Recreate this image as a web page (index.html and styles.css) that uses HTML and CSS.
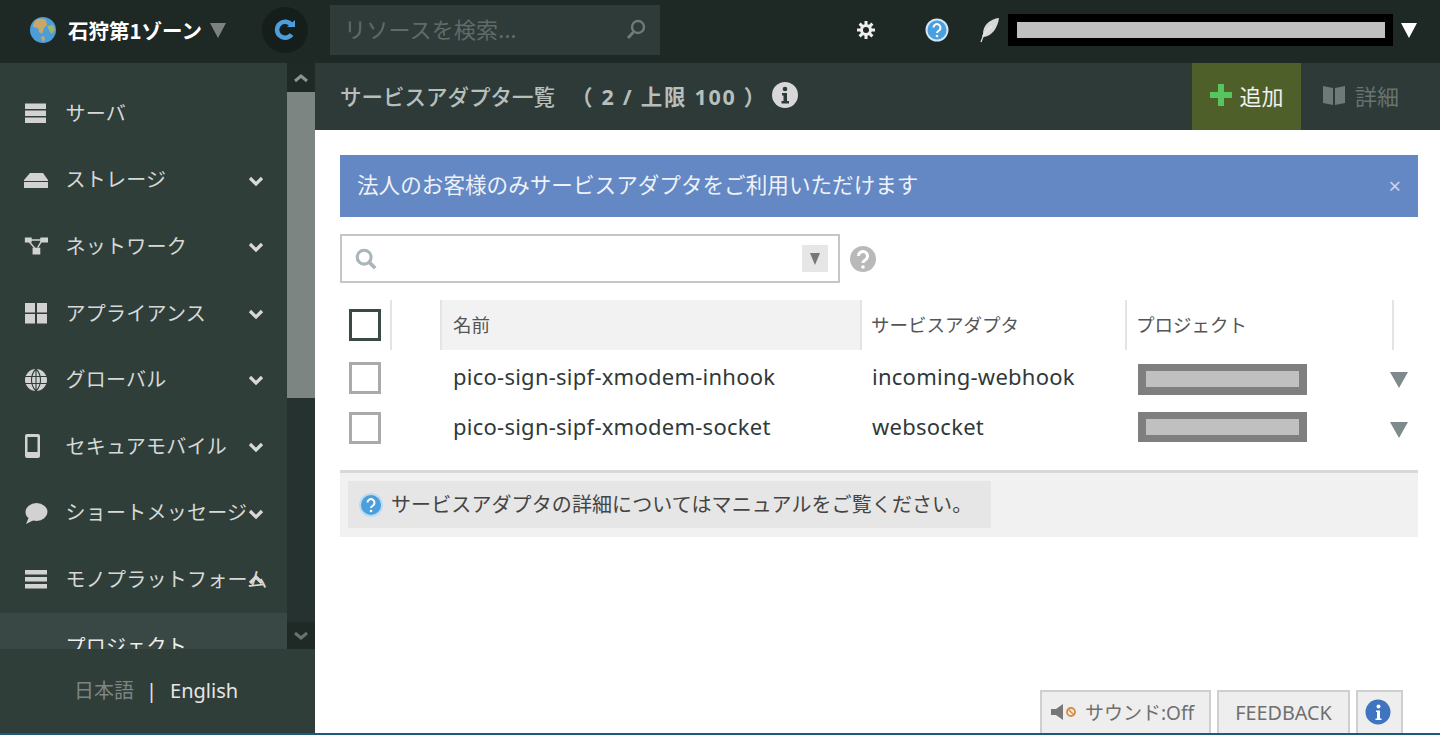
FILE: index.html
```html
<!DOCTYPE html>
<html lang="ja">
<head>
<meta charset="utf-8">
<title>サービスアダプタ一覧</title>
<link rel="stylesheet" href="styles.css">
</head>
<body>
<header class="topbar">
  <div class="zone">
    <svg class="globe" viewBox="0 0 26 26"><circle cx="13" cy="13" r="13" fill="#4d9ed8"/><path d="M6 3c3-2 8-2 10 0l1 5-3 3-2 6-3-2-1-4-5-1c0-3 1-5 3-7z" fill="#c8a86a"/><path d="M17 9l6-1 2 5-3 4-2-2z" fill="#9fb56d"/><path d="M11 20l3-1 1 4-2 2z" fill="#c8a86a"/></svg>
    <span class="zone-name">石狩第1ゾーン</span>
    <span class="tri tri-grey"></span>
  </div>
  <div class="refresh">
    <svg viewBox="0 0 24 24" width="24" height="24"><path d="M18.500 16.500a8 8 0 1 1 0-9.500" fill="none" stroke="#4a9fdc" stroke-width="4.500"/><path d="M14 9h8V2z" fill="#4a9fdc"/></svg>
  </div>
  <div class="top-search">
    <span class="top-search-text">リソースを検索...</span>
    <svg viewBox="0 0 24 24" width="24" height="24"><circle cx="14" cy="9" r="6" fill="none" stroke="#6f7b78" stroke-width="2.400"/><path d="M9.500 14L4 20" stroke="#6f7b78" stroke-width="3"/></svg>
  </div>
  <div class="top-right">
    <svg class="gear" viewBox="0 0 20 20" width="20" height="20"><circle cx="10" cy="10" r="4.500" fill="none" stroke="#eee" stroke-width="3"/><path d="M10 1v4M10 15v4M1 10h4M15 10h4M3.600 3.600l3 3M13.400 13.400l3 3M16.400 3.600l-3 3M6.600 13.400l-3 3" stroke="#eee" stroke-width="3"/></svg>
    <svg class="help" viewBox="0 0 24 24" width="24" height="24"><circle cx="12" cy="12" r="10.500" fill="#4a9fdc" stroke="#cfe6f6" stroke-width="2"/><path d="M8.500 9.500a3.500 3.500 0 1 1 5.500 3c-1.300.8-2 1.300-2 2.500" fill="none" stroke="#fff" stroke-width="2"/><circle cx="12" cy="18" r="1.300" fill="#fff"/></svg>
    <svg class="feather" viewBox="0 0 20 26" width="20" height="26"><path d="M19 1C10 2 3 8 3 17l-1 2 1 1C12 20 18 10 19 1z" fill="#d8d8d8"/><path d="M12 9C7 13 3 18 1 25" fill="none" stroke="#e8e8e8" stroke-width="1.200"/></svg>
    <div class="redact-user"><div class="redact-user-in"></div></div>
    <span class="tri tri-white"></span>
  </div>
</header>

<div class="layout">
  <aside class="side">
    <div class="nav-wrap">
      <nav class="nav">
        <div class="nav-item">
          <svg class="nav-icon" viewBox="0 0 24 24"><path d="M1 2.500h21v5.500H1zM1 9.500h21v5.500H1zM1 16.500h21v5.500H1z" fill="#d2d2d2"/></svg>
          <span class="nav-label">サーバ</span>
        </div>
        <div class="nav-item">
          <svg class="nav-icon" viewBox="0 0 24 24"><path d="M6 5h13l5 7v1H0v-1zM0 14h25v6H0z" fill="#d2d2d2"/></svg>
          <span class="nav-label">ストレージ</span>
          <svg class="chev" viewBox="0 0 16 12"><path d="M2 3l6 6 6-6" fill="none" stroke="#d8d8d8" stroke-width="3.200"/></svg>
        </div>
        <div class="nav-item">
          <svg class="nav-icon" viewBox="0 0 28 24"><path d="M1 2h8v6H1zM19 2h9v6h-9zM10 14h9v8h-9z" fill="#d2d2d2"/><path d="M8 5h12M6 7l7 8M20 7l-4 7" stroke="#d2d2d2" stroke-width="1.600"/></svg>
          <span class="nav-label">ネットワーク</span>
          <svg class="chev" viewBox="0 0 16 12"><path d="M2 3l6 6 6-6" fill="none" stroke="#d8d8d8" stroke-width="3.200"/></svg>
        </div>
        <div class="nav-item">
          <svg class="nav-icon" viewBox="0 0 24 24"><path d="M1 2h10v9.500H1zM13 2h10v9.500H13zM1 13h10v9.500H1zM13 13h10v9.500H13z" fill="#d2d2d2"/></svg>
          <span class="nav-label">アプライアンス</span>
          <svg class="chev" viewBox="0 0 16 12"><path d="M2 3l6 6 6-6" fill="none" stroke="#d8d8d8" stroke-width="3.200"/></svg>
        </div>
        <div class="nav-item">
          <svg class="nav-icon" viewBox="0 0 24 24"><circle cx="12" cy="12" r="11" fill="#d2d2d2"/><path d="M1 8.500h22M1 15.500h22M12 1v22M12 1c-6 6-6 16 0 22M12 1c6 6 6 16 0 22" fill="none" stroke="#303e3a" stroke-width="1.100"/></svg>
          <span class="nav-label">グローバル</span>
          <svg class="chev" viewBox="0 0 16 12"><path d="M2 3l6 6 6-6" fill="none" stroke="#d8d8d8" stroke-width="3.200"/></svg>
        </div>
        <div class="nav-item">
          <svg class="nav-icon" viewBox="0 0 24 24"><path d="M3 0h11a2 2 0 0 1 2 2v20a2 2 0 0 1-2 2H3a2 2 0 0 1-2-2V2a2 2 0 0 1 2-2zM3.500 3v15h10V3z" fill="#d2d2d2"/></svg>
          <span class="nav-label">セキュアモバイル</span>
          <svg class="chev" viewBox="0 0 16 12"><path d="M2 3l6 6 6-6" fill="none" stroke="#d8d8d8" stroke-width="3.200"/></svg>
        </div>
        <div class="nav-item">
          <svg class="nav-icon" viewBox="0 0 24 24"><ellipse cx="12.500" cy="11" rx="11" ry="9" fill="#d2d2d2"/><path d="M5 16l-3 7 8-4z" fill="#d2d2d2"/></svg>
          <span class="nav-label">ショートメッセージ</span>
          <svg class="chev" viewBox="0 0 16 12"><path d="M2 3l6 6 6-6" fill="none" stroke="#d8d8d8" stroke-width="3.200"/></svg>
        </div>
        <div class="nav-item">
          <svg class="nav-icon" viewBox="0 0 24 24"><path d="M1 3h22v4.500H1zM1 10h22v4.500H1zM1 17h22v4.500H1z" fill="#d2d2d2"/></svg>
          <span class="nav-label">モノプラットフォーム</span>
          <svg class="chev" viewBox="0 0 16 12"><path d="M2 9l6-6 6 6" fill="none" stroke="#d8d8d8" stroke-width="3.200"/></svg>
        </div>
        <div class="nav-item nav-sel">
          <span class="nav-icon-space"></span>
          <span class="nav-label">プロジェクト</span>
        </div>
      </nav>
      <div class="scrollbar">
        <div class="sb-btn sb-up"><svg viewBox="0 0 16 10" width="16" height="10"><path d="M2 8l6-5 6 5" fill="none" stroke="#8c9491" stroke-width="3"/></svg></div>
        <div class="sb-thumb"></div>
        <div class="sb-track"></div>
        <div class="sb-btn sb-down"><svg viewBox="0 0 16 10" width="16" height="10"><path d="M2 2l6 5 6-5" fill="none" stroke="#69726f" stroke-width="3"/></svg></div>
      </div>
    </div>
    <div class="lang">
      <span class="lang-off">日本語</span><span class="lang-sep">|</span><span class="lang-on">English</span>
    </div>
  </aside>

  <main class="main">
    <div class="main-head">
      <div class="title">
        <span>サービスアダプタ一覧</span><span class="count">（ 2 / 上限 100 ）</span>
        <svg viewBox="0 0 26 26" width="26" height="26"><circle cx="13" cy="13" r="13" fill="#d8d8d8"/><circle cx="13" cy="7" r="2.300" fill="#2e3a37"/><path d="M10 11h5v8h2v2.500H9.500V19H11.500v-5.500H10z" fill="#2e3a37"/></svg>
      </div>
      <div class="btn-add">
        <svg viewBox="0 0 24 24" width="24" height="24"><path d="M9 1h6v8h8v6h-8v8H9v-8H1V9h8z" fill="#57c55f"/></svg>
        <span>追加</span>
      </div>
      <div class="btn-detail">
        <svg viewBox="0 0 24 24" width="24" height="24"><path d="M1 3l10 2v17L1 20zM13 5l10-2v17l-10 2z" fill="#6f7a77"/></svg>
        <span>詳細</span>
      </div>
    </div>

    <div class="content">
      <div class="alert">
        <span class="alert-text">法人のお客様のみサービスアダプタをご利用いただけます</span>
        <span class="close">×</span>
      </div>

      <div class="filter">
        <div class="filter-box">
          <svg viewBox="0 0 26 26" width="24" height="24"><circle cx="11" cy="11" r="7.500" fill="none" stroke="#a9b6bb" stroke-width="3.400"/><path d="M16 16l7 7" stroke="#a9b6bb" stroke-width="4"/></svg>
          <span class="filter-drop"><span class="tri tri-small"></span></span>
        </div>
        <svg class="filter-help" viewBox="0 0 26 26" width="26" height="26"><circle cx="13" cy="13" r="13" fill="#b9b9b9"/><path d="M8.500 10a4.500 4.500 0 1 1 7 3.700c-1.600 1-2.500 1.600-2.500 3.300" fill="none" stroke="#fff" stroke-width="3"/><circle cx="13" cy="21" r="1.800" fill="#fff"/></svg>
      </div>

      <div class="table">
        <div class="row head">
          <div class="cell cell-check"><span class="check check-head"></span></div>
          <div class="cell cell-gap"></div>
          <div class="cell cell-name th-name">名前</div>
          <div class="cell cell-type">サービスアダプタ</div>
          <div class="cell cell-proj">プロジェクト</div>
          <div class="cell cell-end"></div>
        </div>
        <div class="row body-row">
          <div class="cell cell-check"><span class="check"></span></div>
          <div class="cell cell-gap"></div>
          <div class="cell cell-name"><span class="cell-text">pico-sign-sipf-xmodem-inhook</span></div>
          <div class="cell cell-type"><span class="cell-text">incoming-webhook</span></div>
          <div class="cell cell-proj"><div class="redact redact-a"><div class="redact-in"></div></div></div>
          <div class="cell cell-end"><span class="tri tri-row"></span></div>
        </div>
        <div class="row body-row">
          <div class="cell cell-check"><span class="check"></span></div>
          <div class="cell cell-gap"></div>
          <div class="cell cell-name"><span class="cell-text">pico-sign-sipf-xmodem-socket</span></div>
          <div class="cell cell-type"><span class="cell-text">websocket</span></div>
          <div class="cell cell-proj"><div class="redact redact-b"><div class="redact-in"></div></div></div>
          <div class="cell cell-end"><span class="tri tri-row"></span></div>
        </div>
      </div>

      <div class="note-band">
        <div class="note">
          <svg viewBox="0 0 24 24" width="24" height="24"><circle cx="12" cy="12" r="11" fill="#4a9fdc" stroke="#bcdcf2" stroke-width="2"/><path d="M8.500 9.500a3.500 3.500 0 1 1 5.500 3c-1.300.8-2 1.300-2 2.500" fill="none" stroke="#fff" stroke-width="2"/><circle cx="12" cy="18" r="1.300" fill="#fff"/></svg>
          <span class="note-text">サービスアダプタの詳細についてはマニュアルをご覧ください。</span>
        </div>
      </div>
    </div>

    <div class="dock">
      <div class="dock-btn dock-sound">
        <svg viewBox="0 0 28 20" width="28" height="20"><path d="M1 7h5l7-5v16l-7-5H1z" fill="#777"/><circle cx="21" cy="10" r="4" fill="none" stroke="#d98a3a" stroke-width="1.800"/><path d="M18.500 7.500l5 5" stroke="#d98a3a" stroke-width="1.500"/></svg>
        <span>サウンド:Off</span>
      </div>
      <div class="dock-btn dock-feedback">FEEDBACK</div>
      <div class="dock-btn dock-info">
        <svg viewBox="0 0 26 26" width="26" height="26"><circle cx="13" cy="13" r="12.500" fill="#3f74c0"/><circle cx="13.500" cy="7.500" r="2" fill="#fff"/><path d="M11 11.500h4v8h1.500V21h-6v-1.500H12V13h-1z" fill="#fff"/></svg>
      </div>
    </div>
  </main>
</div>
<div class="bottom-line"></div>
</body>
</html>
```
FILE: styles.css
```css
* { box-sizing: border-box; }
html, body { margin: 0; height: 100%; }
body {
  width: 1440px;
  height: 735px;
  overflow: hidden;
  position: relative;
  background: #fff;
  display: flex;
  flex-direction: column;
  font-family: "Noto Sans", "Noto Sans CJK JP", sans-serif;
  font-size: 20px;
  color: #333;
}

/* triangles */
.tri { display: inline-block; width: 0; height: 0; border-style: solid; border-color: transparent; border-bottom-width: 0; }
.tri-grey { border-width: 15px 8px 0; border-top-color: #7c8280; }
.tri-white { border-width: 15px 8px 0; border-top-color: #fff; }
.tri-small { border-width: 12px 5px 0; border-top-color: #777; }
.tri-row { border-width: 16px 9px 0; border-top-color: #7f8a8c; margin: 4px 0 0 -2px; }

/* top bar */
.topbar { height: 63px; flex: none; background: #1e2825; display: flex; align-items: center; padding-bottom: 3px; color: #fff; }
.zone { display: flex; align-items: center; width: 262px; padding-left: 30px; flex: none; }
.globe { width: 26px; height: 26px; flex: none; }
.zone-name { font-weight: 700; font-size: 20.5px; margin-left: 12px; white-space: nowrap; font-family: "Noto Sans CJK JP", sans-serif; }
.zone .tri { margin-left: 8px; }
.refresh { width: 46px; height: 46px; border-radius: 50%; background: #161e1c; display: flex; align-items: center; justify-content: center; flex: none; }
.top-search { margin-left: 22px; width: 330px; height: 50px; background: #2f3b38; color: #5f6b68; display: flex; align-items: center; justify-content: space-between; padding: 0 12px 0 15px; flex: none; font-size: 22px; }
.top-search-text { margin-bottom: 4px; letter-spacing: 0.2px; margin-left: -1px; }
.top-right { display: flex; align-items: center; flex: 1; padding-left: 196px; }
.help { margin-left: 49px; }
.feather { margin-left: 31px; }
.redact-user { margin-left: 8px; width: 385px; height: 32px; background: #000; padding: 8px 8px 8px 9px; flex: none; }
.redact-user-in { height: 16px; background: #c0c0c0; }
.top-right .tri-white { margin-left: 8px; }

/* layout */
.layout { flex: 1; min-height: 0; display: flex; }
.side { width: 315px; flex: none; background: #303e3a; display: flex; flex-direction: column; }
.nav-wrap { height: 586px; display: flex; flex: none; overflow: hidden; }
.nav { width: 287px; flex: none; padding-top: 17px; overflow: hidden; color: #d6d9d8; }
.nav-item { position: relative; height: 66.6px; display: flex; align-items: center; padding-left: 24px; white-space: nowrap; }
.nav-label { letter-spacing: 0.25px; margin-bottom: 2px; margin-left: -0.5px; }
.nav-icon { width: 24px; height: 24px; flex: none; margin-right: 18px; }
.nav-icon-space { width: 24px; flex: none; margin-right: 18px; }
.chev { position: absolute; left: 248px; top: 28px; width: 16px; height: 12px; }
.nav-sel { background: #394745; color: #eee; }
.scrollbar { width: 28px; flex: none; display: flex; flex-direction: column; background: #263230; }
.sb-btn { display: flex; align-items: center; justify-content: center; background: #1f2a27; flex: none; }
.sb-up { height: 29px; }
.sb-thumb { height: 306px; background: #7d8583; flex: none; }
.sb-track { flex: 1; }
.sb-down { height: 27px; }
.lang { flex: 1; display: flex; align-items: flex-start; padding: 27px 0 0 74px; color: #e6e6e6; line-height: 30px; }
.lang-off { color: #7d8583; }
.lang-sep { margin: 0 13px 0 12px; }

/* main */
.main { flex: 1; min-width: 0; display: flex; flex-direction: column; }
.main-head { height: 67px; flex: none; background: #2e3a37; display: flex; align-items: stretch; padding-left: 25px; }
.title { flex: 1; display: flex; align-items: center; padding-bottom: 3px; color: #b7bfbc; font-weight: 500; font-size: 21.5px; white-space: nowrap; }
.count { margin-left: 16px; letter-spacing: 1.7px; margin-right: 5px; font-weight: 700; }
.btn-add { width: 109px; background: #4f5f2a; color: #f0f0f0; display: flex; align-items: center; justify-content: center; gap: 6px; padding-bottom: 4px; font-size: 22px; flex: none; }
.btn-detail { width: 139px; flex: none; color: #687370; display: flex; align-items: center; gap: 9px; padding: 0 0 4px 21px; font-size: 22px; }

.content { flex: 1; min-height: 0; padding: 25px 22px 0 25px; }
.alert { height: 62px; background: #6488c4; color: #eef2f8; display: flex; align-items: center; justify-content: space-between; padding: 0 17px 0 17px; font-size: 21.6px; }
.alert-text { margin-bottom: 5px; }
.close { color: #c8d5ea; font-size: 22px; margin-bottom: 3px; }

.filter { display: flex; align-items: center; margin-top: 17px; gap: 10px; }
.filter-box { width: 500px; height: 49px; border: 2px solid #c6c6c6; display: flex; align-items: center; justify-content: space-between; padding: 0 10px 0 12px; }
.filter-drop { width: 26px; height: 27px; background: #e6e6e6; display: flex; align-items: center; justify-content: center; }

.table { margin-top: 17px; }
.row { display: grid; grid-template-columns: 50px 50px 420px 265px 267px 26px; }
.head { height: 50px; font-size: 18.500px; color: #555; margin-bottom: 3px; }
.body-row { height: 50px; color: #2f3a3a; font-size: 22px; letter-spacing: 0.25px; }
.cell { display: flex; align-items: center; white-space: nowrap; }
.cell-text { margin-bottom: 4px; }
.head .cell { border-left: 2px solid #e4e4e4; padding-bottom: 2px; }
.head .cell:first-child { border-left: 0; padding-bottom: 0; }
.cell-name { padding-left: 13px; }
.cell-type, .cell-proj { padding-left: 12px; }
.head .cell-name { padding-left: 11px; }
.head .cell-type, .head .cell-proj { padding-left: 9px; }
.th-name { background: #f2f2f2; margin-right: -1px; }
.check { display: block; width: 32px; height: 32px; border: 3px solid #aaa; margin-left: 9px; }
.check-head { border-color: #3b4a46; }
.redact { width: 169px; background: #7f7f7f; padding: 7px 8px; margin-left: 1px; }
.redact-a { height: 31px; margin-top: 2px; }
.redact-b { height: 30px; margin-top: -2px; }
.redact-in { height: 16px; background: #c0c0c0; }

.note-band { margin-top: 17px; height: 67px; border-top: 3px solid #d8d8d8; background: #f1f1f1; padding: 8px 8px; }
.note { width: 643px; height: 47px; background: #e6e6e6; display: flex; align-items: center; padding-left: 11px; gap: 8px; color: #444; white-space: nowrap; }
.note-text { letter-spacing: 0.1px; margin-bottom: 2px; }

.dock { position: absolute; right: 37px; bottom: 2px; display: flex; gap: 6px; align-items: stretch; height: 43px; }
.dock-btn { background: #eeeeee; border: 2px solid #cfcfcf; border-bottom: 0; display: flex; align-items: center; justify-content: center; color: #6f6f6f; font-size: 19px; padding-bottom: 1px; }
.dock-sound { width: 171px; gap: 7px; justify-content: flex-start; padding-left: 8px; }
.dock-feedback { width: 133px; font-size: 19.800px; }
.dock-info { width: 47px; padding-right: 3px; }

.bottom-line { position: absolute; left: 0; right: 0; bottom: 0; height: 2px; background: #1c5a7d; }
```
